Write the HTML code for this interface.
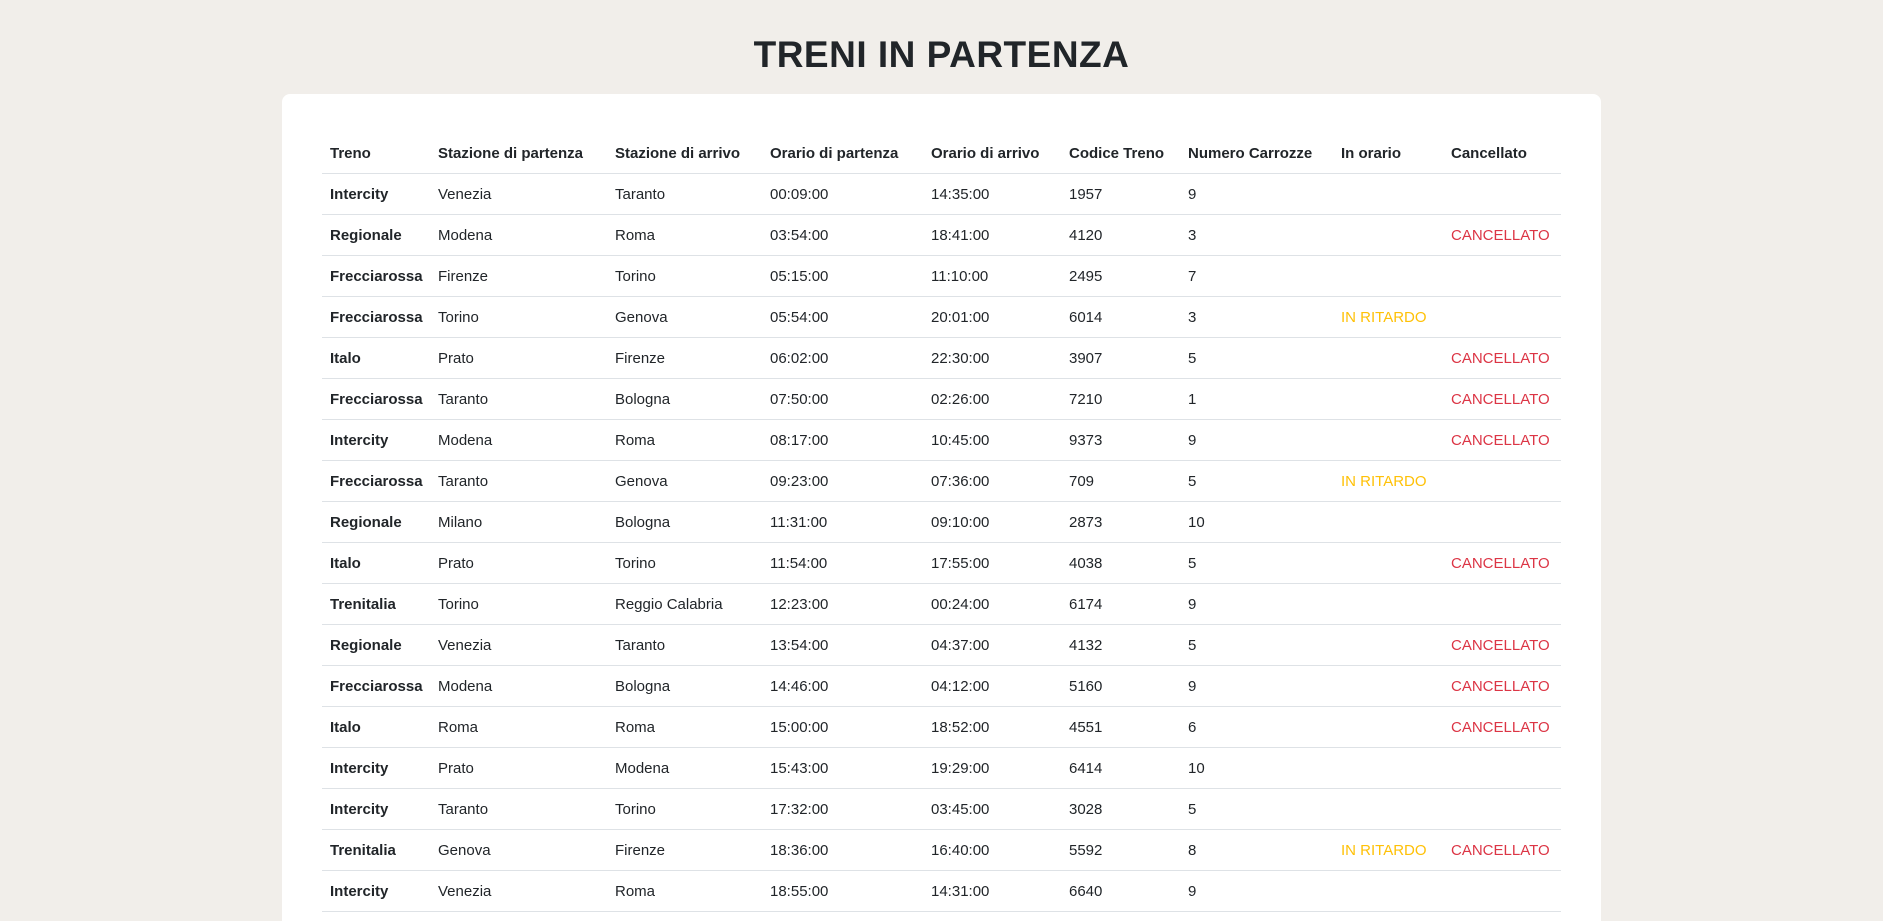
<!DOCTYPE html>
<html><head><meta charset="utf-8"><style>
html,body{margin:0;padding:0;background:#f1eeea;width:1883px;height:921px;overflow:hidden;font-family:"Liberation Sans",sans-serif;color:#212529}
h1{margin:0;position:absolute;top:30px;left:0;width:1883px;text-align:center;font-size:37px;font-weight:700;letter-spacing:0.5px;line-height:50px}
.card{position:absolute;left:282px;top:94px;width:1319px;height:827px;background:#fff;border-radius:8px 8px 0 0;overflow:hidden}
table{position:absolute;left:40px;top:40px;border-collapse:collapse;table-layout:fixed;width:1239px;font-size:15px}
th,td{padding:0 8px;text-align:left;white-space:nowrap;overflow:hidden;border-bottom:1px solid #dee2e6}
th{height:39px;font-weight:700}
td{height:40px}
td:first-child{font-weight:700}
.r{color:#dc3545}.y{color:#ffc107}
</style></head><body>
<h1>TRENI IN PARTENZA</h1>
<div class="card"><table>
<colgroup><col style="width:108px"><col style="width:177px"><col style="width:155px"><col style="width:161px"><col style="width:138px"><col style="width:119px"><col style="width:153px"><col style="width:110px"><col style="width:118px"></colgroup>
<tr><th>Treno</th><th>Stazione di partenza</th><th>Stazione di arrivo</th><th>Orario di partenza</th><th>Orario di arrivo</th><th>Codice Treno</th><th>Numero Carrozze</th><th>In orario</th><th>Cancellato</th></tr>
<tr><td>Intercity</td><td>Venezia</td><td>Taranto</td><td>00:09:00</td><td>14:35:00</td><td>1957</td><td>9</td><td></td><td></td></tr>
<tr><td>Regionale</td><td>Modena</td><td>Roma</td><td>03:54:00</td><td>18:41:00</td><td>4120</td><td>3</td><td></td><td class="r">CANCELLATO</td></tr>
<tr><td>Frecciarossa</td><td>Firenze</td><td>Torino</td><td>05:15:00</td><td>11:10:00</td><td>2495</td><td>7</td><td></td><td></td></tr>
<tr><td>Frecciarossa</td><td>Torino</td><td>Genova</td><td>05:54:00</td><td>20:01:00</td><td>6014</td><td>3</td><td class="y">IN RITARDO</td><td></td></tr>
<tr><td>Italo</td><td>Prato</td><td>Firenze</td><td>06:02:00</td><td>22:30:00</td><td>3907</td><td>5</td><td></td><td class="r">CANCELLATO</td></tr>
<tr><td>Frecciarossa</td><td>Taranto</td><td>Bologna</td><td>07:50:00</td><td>02:26:00</td><td>7210</td><td>1</td><td></td><td class="r">CANCELLATO</td></tr>
<tr><td>Intercity</td><td>Modena</td><td>Roma</td><td>08:17:00</td><td>10:45:00</td><td>9373</td><td>9</td><td></td><td class="r">CANCELLATO</td></tr>
<tr><td>Frecciarossa</td><td>Taranto</td><td>Genova</td><td>09:23:00</td><td>07:36:00</td><td>709</td><td>5</td><td class="y">IN RITARDO</td><td></td></tr>
<tr><td>Regionale</td><td>Milano</td><td>Bologna</td><td>11:31:00</td><td>09:10:00</td><td>2873</td><td>10</td><td></td><td></td></tr>
<tr><td>Italo</td><td>Prato</td><td>Torino</td><td>11:54:00</td><td>17:55:00</td><td>4038</td><td>5</td><td></td><td class="r">CANCELLATO</td></tr>
<tr><td>Trenitalia</td><td>Torino</td><td>Reggio Calabria</td><td>12:23:00</td><td>00:24:00</td><td>6174</td><td>9</td><td></td><td></td></tr>
<tr><td>Regionale</td><td>Venezia</td><td>Taranto</td><td>13:54:00</td><td>04:37:00</td><td>4132</td><td>5</td><td></td><td class="r">CANCELLATO</td></tr>
<tr><td>Frecciarossa</td><td>Modena</td><td>Bologna</td><td>14:46:00</td><td>04:12:00</td><td>5160</td><td>9</td><td></td><td class="r">CANCELLATO</td></tr>
<tr><td>Italo</td><td>Roma</td><td>Roma</td><td>15:00:00</td><td>18:52:00</td><td>4551</td><td>6</td><td></td><td class="r">CANCELLATO</td></tr>
<tr><td>Intercity</td><td>Prato</td><td>Modena</td><td>15:43:00</td><td>19:29:00</td><td>6414</td><td>10</td><td></td><td></td></tr>
<tr><td>Intercity</td><td>Taranto</td><td>Torino</td><td>17:32:00</td><td>03:45:00</td><td>3028</td><td>5</td><td></td><td></td></tr>
<tr><td>Trenitalia</td><td>Genova</td><td>Firenze</td><td>18:36:00</td><td>16:40:00</td><td>5592</td><td>8</td><td class="y">IN RITARDO</td><td class="r">CANCELLATO</td></tr>
<tr><td>Intercity</td><td>Venezia</td><td>Roma</td><td>18:55:00</td><td>14:31:00</td><td>6640</td><td>9</td><td></td><td></td></tr>
</table></div>
</body></html>
